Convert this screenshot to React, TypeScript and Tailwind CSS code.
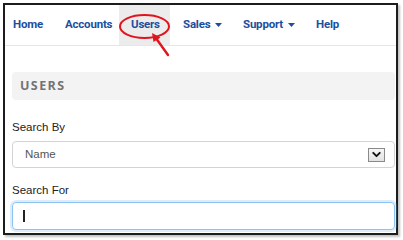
import { ChevronDown } from 'lucide-react'

const navItems = [
  { label: 'Home', w: 'w-[48px] pl-[8px]' },
  { label: 'Accounts', w: 'w-[66px] pl-[12px]' },
  { label: 'Users', w: 'w-[51px] pl-[12px] bg-[#ececec]' },
  { label: 'Sales', w: 'w-[61px] pl-[13px]', caret: true },
  { label: 'Support', w: 'w-[73px] pl-[12px]', caret: true },
  { label: 'Help', w: 'w-[46px] pl-[12px]' },
]

function Caret() {
  return (
    <svg width="7" height="4" viewBox="0 0 7 4" className="ml-[5px]">
      <path d="M0 0h7L3.5 4z" fill="#1b4f9e" />
    </svg>
  )
}

export default function App() {
  return (
    <div className="relative w-[403px] h-[240px] bg-white p-[3px] font-['Liberation_Sans',sans-serif]">
      <div className="w-[395px] h-[232px] border-2 border-[#1c1c1c] shadow-[2px_2px_2px_rgba(0,0,0,0.25)] bg-white flex flex-col">
        <nav className="flex h-[41px] border-b border-[#e6e6e6] shrink-0">
          {navItems.map((item) => (
            <div
              key={item.label}
              className={`${item.w} flex items-center h-full text-[11.5px] font-bold text-[#1b4f9e] tracking-[-0.2px] font-['Liberation_Sans_Narrow','Roboto',sans-serif]`}
            >
              {item.label}
              {item.caret && <Caret />}
            </div>
          ))}
        </nav>

        <div className="pl-[7px] pr-[1px] flex flex-col">
          <div className="mt-[26px] h-[28px] rounded-[4px] bg-[#f3f3f3] flex items-center pl-[8px]">
            <span className="text-[12.5px] font-bold tracking-[1.4px] text-[#737373] font-['Open_Sans',sans-serif]">USERS</span>
          </div>

          <label className="mt-[19px] h-[16px] leading-[16px] text-[11.5px] text-[#222222]">Search By</label>
          <div className="mt-[6px] h-[27px] rounded-[4px] border border-[#d4d4d4] flex items-center justify-between pl-[12px] pr-[9px]">
            <span className="text-[11.5px] text-[#555555]">Name</span>
            <div className="w-[17px] h-[14px] border border-[#8a8a8a] bg-gradient-to-b from-[#f7f7f7] to-[#e2e2e2] flex items-center justify-center">
              <ChevronDown size={13} strokeWidth={3.5} className="text-[#111111]" />
            </div>
          </div>

          <label className="mt-[14px] h-[16px] leading-[16px] text-[11.5px] text-[#222222]">Search For</label>
          <div className="mt-[4px] h-[28px] rounded-[4px] border border-[#8cc3f2] shadow-[0_0_0_2px_rgba(120,180,240,0.25)] flex items-center pl-[10px]">
            <div className="w-[1.5px] h-[12px] bg-[#222222]" />
          </div>
        </div>
      </div>

      <svg className="absolute left-0 top-0 pointer-events-none" width="403" height="240" viewBox="0 0 403 240">
        <ellipse cx="144.5" cy="26.5" rx="24.5" ry="11.5" fill="none" stroke="#e0141e" strokeWidth="2" />
        <path d="M168 55L155.5 37.5" stroke="#e0141e" strokeWidth="2.4" strokeLinecap="round" />
        <path d="M152 33L160.5 37.5L153.5 42z" fill="#e0141e" />
      </svg>
    </div>
  )
}
